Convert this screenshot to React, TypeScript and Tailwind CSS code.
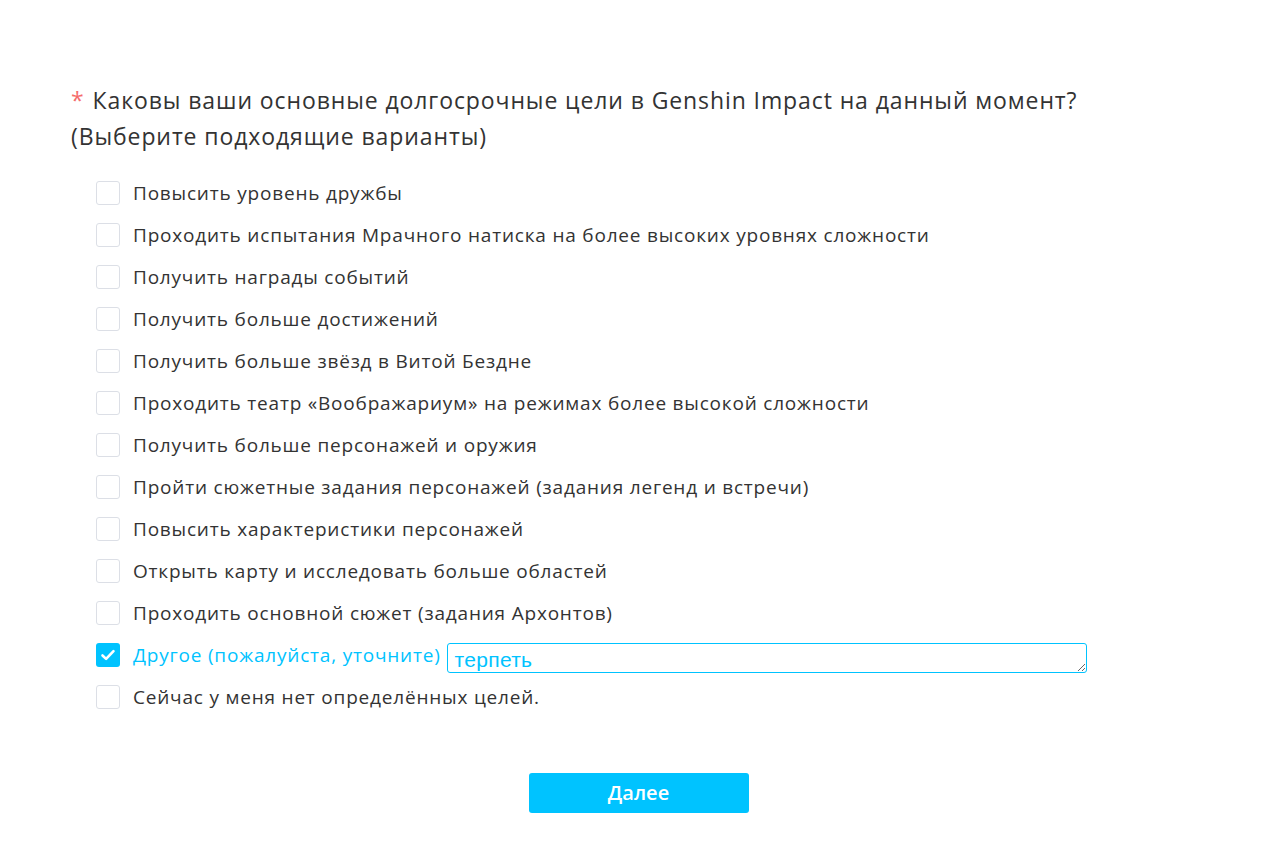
import { useState } from 'react';

const OPTIONS = [
  'Повысить уровень дружбы',
  'Проходить испытания Мрачного натиска на более высоких уровнях сложности',
  'Получить награды событий',
  'Получить больше достижений',
  'Получить больше звёзд в Витой Бездне',
  'Проходить театр «Воображариум» на режимах более высокой сложности',
  'Получить больше персонажей и оружия',
  'Пройти сюжетные задания персонажей (задания легенд и встречи)',
  'Повысить характеристики персонажей',
  'Открыть карту и исследовать больше областей',
  'Проходить основной сюжет (задания Архонтов)',
];

function Box({ checked }: { checked: boolean }) {
  return checked ? (
    <span className="flex h-[24px] w-[24px] shrink-0 items-center justify-center rounded-[3px] bg-[#00c3ff]">
      <svg width="18" height="18" viewBox="0 0 18 18" fill="none">
        <path d="M3.5 9.5l3.6 3.4L14.5 5.2" stroke="white" strokeWidth="2.6" strokeLinecap="round" strokeLinejoin="round" />
      </svg>
    </span>
  ) : (
    <span className="h-[24px] w-[24px] shrink-0 rounded-[3px] border border-[#dcdfe6] bg-white" />
  );
}

export default function App() {
  const [selected, setSelected] = useState<number[]>([OPTIONS.length]);
  const [other, setOther] = useState('терпеть');

  const toggle = (i: number) =>
    setSelected((s) => (s.includes(i) ? s.filter((x) => x !== i) : [...s, i]));

  return (
    <div className="min-h-screen bg-white font-['Open_Sans','Noto_Sans',sans-serif] text-[#333]">
      <div className="pl-[71px] pt-[82px]">
        <h2 className="text-[23px] leading-[36px] font-normal tracking-[0.9px]">
          <span className="mr-[8px] text-[#f56c6c]">*</span>
          Каковы ваши основные долгосрочные цели в Genshin Impact на данный момент?
          <br />
          (Выберите подходящие варианты)
        </h2>

        <div className="mt-[18px] flex flex-col pl-[25px] text-[19px] tracking-[0.8px]">
          {OPTIONS.map((label, i) => (
            <label
              key={label}
              className="flex h-[42px] cursor-pointer items-center gap-[13px]"
              onClick={() => toggle(i)}
            >
              <Box checked={selected.includes(i)} />
              <span>{label}</span>
            </label>
          ))}

          <div className="flex h-[42px] items-center gap-[13px]">
            <span className="cursor-pointer" onClick={() => toggle(OPTIONS.length)}>
              <Box checked={selected.includes(OPTIONS.length)} />
            </span>
            <span
              className={selected.includes(OPTIONS.length) ? 'cursor-pointer text-[#00c3ff]' : 'cursor-pointer'}
              onClick={() => toggle(OPTIONS.length)}
            >
              Другое (пожалуйста, уточните)
            </span>
            <textarea
              value={other}
              onChange={(e) => setOther(e.target.value)}
              rows={1}
              className="-ml-[7px] mt-[5px] h-[30px] w-[640px] rounded-[3px] border border-[#00c3ff] px-[7px] pt-[2px] font-['Liberation_Sans',Arial,sans-serif] text-[21px] leading-[27px] tracking-[0.3px] text-[#00c3ff] outline-none"
            />
          </div>

          <label
            className="flex h-[42px] cursor-pointer items-center gap-[13px]"
            onClick={() => toggle(OPTIONS.length + 1)}
          >
            <Box checked={selected.includes(OPTIONS.length + 1)} />
            <span>Сейчас у меня нет определённых целей.</span>
          </label>
        </div>

        <div className="mt-[55px] flex justify-center pr-[73px]">
          <button className="h-[40px] w-[220px] rounded-[3px] bg-[#00c3ff] text-[20px] font-semibold text-white">
            Далее
          </button>
        </div>
      </div>
    </div>
  );
}
